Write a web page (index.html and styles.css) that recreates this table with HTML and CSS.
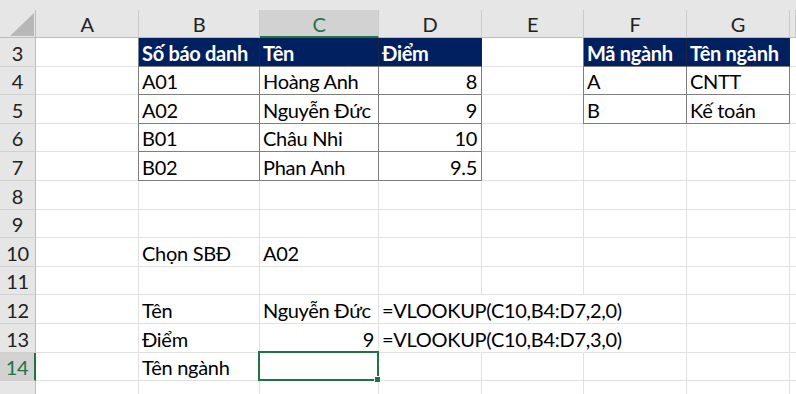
FILE: index.html
```html
<!DOCTYPE html>
<html lang="vi">
<head>
  <meta charset="UTF-8">
  <meta name="viewport" content="width=device-width, initial-scale=1.0">
  <title>VLOOKUP - Sheet1</title>
  <link rel="stylesheet" href="styles.css">
</head>
<body>
  <div class="sheet">
    <!-- thanh trống phía trên tiêu đề cột -->
    <div class="topbar"></div>

    <!-- tiêu đề cột -->
    <div class="row head">
      <div class="corner">
        <svg width="36" height="28" viewBox="0 0 36 28"><polygon points="10,26 34,26 34,3" fill="#b7b7b7"/></svg>
      </div>
      <div class="col">A</div>
      <div class="col">B</div>
      <div class="col active">C</div>
      <div class="col">D</div>
      <div class="col">E</div>
      <div class="col">F</div>
      <div class="col">G</div>
      <div class="col"></div>
    </div>

    <div class="row">
      <div class="num">3</div>
      <div class="cell"></div>
      <div class="cell th first">Số báo danh</div>
      <div class="cell th">Tên</div>
      <div class="cell th">Điểm</div>
      <div class="cell"></div>
      <div class="cell th first">Mã ngành</div>
      <div class="cell th">Tên ngành</div>
      <div class="cell"></div>
    </div>

    <div class="row">
      <div class="num">4</div>
      <div class="cell"></div>
      <div class="cell tb first">A01</div>
      <div class="cell tb">Hoàng Anh</div>
      <div class="cell tb right">8</div>
      <div class="cell"></div>
      <div class="cell tb first">A</div>
      <div class="cell tb">CNTT</div>
      <div class="cell"></div>
    </div>

    <div class="row">
      <div class="num">5</div>
      <div class="cell"></div>
      <div class="cell tb first">A02</div>
      <div class="cell tb">Nguyễn Đức</div>
      <div class="cell tb right">9</div>
      <div class="cell"></div>
      <div class="cell tb first">B</div>
      <div class="cell tb">Kế toán</div>
      <div class="cell"></div>
    </div>

    <div class="row">
      <div class="num">6</div>
      <div class="cell"></div>
      <div class="cell tb first">B01</div>
      <div class="cell tb">Châu Nhi</div>
      <div class="cell tb right">10</div>
      <div class="cell"></div>
      <div class="cell"></div>
      <div class="cell"></div>
      <div class="cell"></div>
    </div>

    <div class="row">
      <div class="num">7</div>
      <div class="cell"></div>
      <div class="cell tb first">B02</div>
      <div class="cell tb">Phan Anh</div>
      <div class="cell tb right">9.5</div>
      <div class="cell"></div>
      <div class="cell"></div>
      <div class="cell"></div>
      <div class="cell"></div>
    </div>

    <div class="row">
      <div class="num">8</div>
      <div class="cell"></div><div class="cell"></div><div class="cell"></div><div class="cell"></div>
      <div class="cell"></div><div class="cell"></div><div class="cell"></div><div class="cell"></div>
    </div>

    <div class="row">
      <div class="num">9</div>
      <div class="cell"></div><div class="cell"></div><div class="cell"></div><div class="cell"></div>
      <div class="cell"></div><div class="cell"></div><div class="cell"></div><div class="cell"></div>
    </div>

    <div class="row">
      <div class="num">10</div>
      <div class="cell"></div>
      <div class="cell">Chọn SBĐ</div>
      <div class="cell">A02</div>
      <div class="cell"></div><div class="cell"></div><div class="cell"></div><div class="cell"></div><div class="cell"></div>
    </div>

    <div class="row">
      <div class="num">11</div>
      <div class="cell"></div><div class="cell"></div><div class="cell"></div><div class="cell"></div>
      <div class="cell"></div><div class="cell"></div><div class="cell"></div><div class="cell"></div>
    </div>

    <div class="row">
      <div class="num">12</div>
      <div class="cell"></div>
      <div class="cell">Tên</div>
      <div class="cell">Nguyễn Đức</div>
      <!-- công thức tràn sang cột E, F nên ẩn đường lưới -->
      <div class="cell spill">=VLOOKUP(C10,B4:D7,2,0)</div>
      <div class="cell spill"></div>
      <div class="cell"></div><div class="cell"></div><div class="cell"></div>
    </div>

    <div class="row">
      <div class="num">13</div>
      <div class="cell"></div>
      <div class="cell">Điểm</div>
      <div class="cell right">9</div>
      <div class="cell spill">=VLOOKUP(C10,B4:D7,3,0)</div>
      <div class="cell spill"></div>
      <div class="cell"></div><div class="cell"></div><div class="cell"></div>
    </div>

    <div class="row">
      <div class="num active">14</div>
      <div class="cell"></div>
      <div class="cell">Tên ngành</div>
      <div class="cell selected"></div>
      <div class="cell"></div><div class="cell"></div><div class="cell"></div><div class="cell"></div><div class="cell"></div>
    </div>

    <!-- hàng 15 chỉ lộ phần trên, số hàng nằm ngoài khung -->
    <div class="row">
      <div class="num"></div>
      <div class="cell"></div><div class="cell"></div><div class="cell"></div><div class="cell"></div>
      <div class="cell"></div><div class="cell"></div><div class="cell"></div><div class="cell"></div>
    </div>
  </div>
</body>
</html>
```

FILE: styles.css
```css
html, body {
  margin: 0;
  padding: 0;
  background: #fff;
}
body {
  font-family: Lato, "Noto Sans", sans-serif;
  font-size: 20px;
  letter-spacing: -0.3px;
  color: #000;
}
.sheet {
  width: 796px;
  height: 394px;
  overflow: hidden;
}
.topbar {
  height: 10px;
  background: #e6e6e6;
}
/* mỗi hàng dùng chung bộ độ rộng cột */
.row {
  display: grid;
  grid-template-columns: 36px 103px 121px 119px 103px 102px 103px 103px 1fr;
  height: 28.6px;
}
.row.head {
  height: 28px;
  background: #e6e6e6;
}
.corner {
  border-right: 1px solid #bcbcbc;
  border-bottom: 1px solid #bcbcbc;
  overflow: hidden;
}
.corner svg {
  display: block;
}
.col {
  display: flex;
  align-items: flex-end;
  justify-content: center;
  padding-bottom: 1px;
  border-right: 1px solid #cacaca;
  border-bottom: 1px solid #bcbcbc;
  color: #222;
}
.col.active {
  background: #d2d2d2;
  color: #217346;
  border-bottom: 2px solid #217346;
  padding-bottom: 0;
}
.num {
  display: flex;
  align-items: flex-end;
  justify-content: center;
  padding-bottom: 1px;
  background: #e6e6e6;
  border-right: 1px solid #bcbcbc;
  border-bottom: 1px solid #d0d0d0;
  color: #222;
}
.num.active {
  background: #d2d2d2;
  color: #217346;
  border-right: 2px solid #217346;
}
.cell {
  display: flex;
  align-items: flex-end;
  min-width: 0;
  padding: 0 3px 1px;
  white-space: nowrap;
  border-right: 1px solid #e1e1e1;
  border-bottom: 1px solid #e1e1e1;
}
.cell.right {
  justify-content: flex-end;
  padding-right: 4px;
}
.cell.spill {
  border-right-color: transparent;
}
/* bảng dữ liệu có viền */
.cell.tb,
.cell.th {
  border-right-color: #7f7f7f;
  border-bottom-color: #7f7f7f;
}
.cell.first {
  box-shadow: -1px 0 0 #7f7f7f;
}
.cell.th {
  background: #002060;
  color: #fff;
  font-weight: bold;
  border-right-color: #1c2540;
}
.cell.selected {
  position: relative;
}
.cell.selected::after {
  content: "";
  position: absolute;
  left: -2px;
  top: -2px;
  right: -1px;
  bottom: -1px;
  border: 2px solid #217346;
}
.cell.selected::before {
  content: "";
  position: absolute;
  right: -3px;
  bottom: -3px;
  width: 5px;
  height: 5px;
  background: #217346;
  border: 1px solid #fff;
  z-index: 1;
}
```
